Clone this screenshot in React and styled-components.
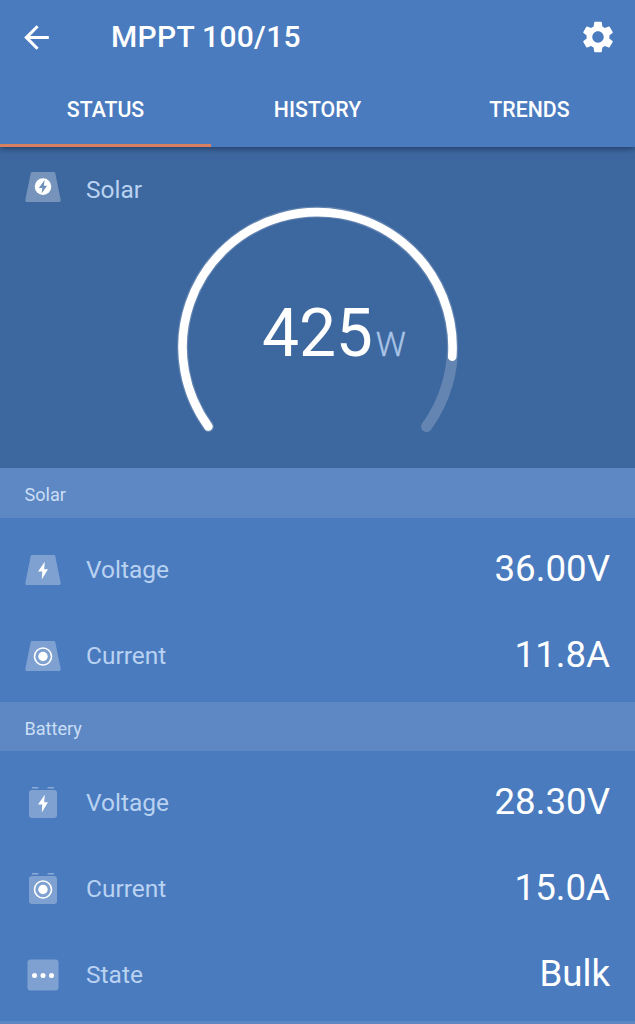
import React from "react";
import styled, { createGlobalStyle } from "styled-components";
import { MdArrowBack, MdSettings } from "react-icons/md";

const GlobalStyle = createGlobalStyle`
  * { box-sizing: border-box; }
  body { margin: 0; background: #4a7bbf; }
`;

const Screen = styled.div`
  height: 1024px;
  overflow: hidden;
  display: flex;
  flex-direction: column;
  background: #4a7bbf;
  color: #fff;
  font-family: Roboto, sans-serif;
`;

const Header = styled.header`
  flex: none;
  height: 147px;
  background: #4a7bbf;
  box-shadow: 0 1px 7px rgba(15, 30, 60, 0.7);
  position: relative;
  z-index: 1;
`;

const Toolbar = styled.div`
  height: 74px;
  padding: 0 18px;
  display: flex;
  align-items: center;
`;

const IconButton = styled.button`
  display: flex;
  padding: 0;
  border: 0;
  background: none;
  color: #fff;
`;

const Title = styled.h1`
  flex: 1;
  margin: -1px 0 0 56px;
  font-size: 30px;
  font-weight: 500;
  line-height: 36px;
  letter-spacing: 0.3px;
`;

const Tabs = styled.nav`
  height: 73px;
  display: grid;
  grid-template-columns: 211px 213px 211px;
`;

const Tab = styled.button`
  padding: 2px 0 0;
  border: 0;
  border-bottom: 3px solid ${(p) => (p.$active ? "#d5805f" : "transparent")};
  background: none;
  color: #fff;
  font: 500 21.3px/26px Roboto, sans-serif;
`;

const Hero = styled.section`
  flex: none;
  height: 321px;
  padding: 21px 24px 0;
  background: #3d689f;
`;

const HeroHeading = styled.div`
  display: flex;
  align-items: flex-start;
  height: 39px;

  > span { margin-top: 7px; }
`;

const Gauge = styled.div`
  width: 290px;
  height: 240px;
  margin: -5px 0 0 149px;
  display: grid;

  > * { grid-area: 1 / 1; }
`;

const Reading = styled.div`
  padding: 92px 0 0 89px;
  display: flex;
  align-items: baseline;
  line-height: 80px;
  font-size: 66px;
  letter-spacing: -0.2px;
`;

const Unit = styled.span`
  margin-left: 3px;
  font-size: 33.5px;
  font-weight: 300;
  color: #a9c4e6;
  -webkit-text-stroke: 0.4px #a9c4e6;
`;

const SectionBand = styled.h2`
  flex: none;
  margin: 0;
  height: ${(p) => p.$height}px;
  padding: 4px 24.5px 0;
  display: flex;
  align-items: center;
  background: #5d88c4;
  color: #cbdef5;
  font-size: 18.1px;
  line-height: 22px;
  font-weight: 400;
`;

const Rows = styled.div`
  flex: none;
  padding: 9px 25px 3px 24px;
`;

const Row = styled.div`
  height: 86px;
  display: flex;
  align-items: center;
`;

const Label = styled.span`
  flex: 1;
  margin-left: 24px;
  font-size: 24.5px;
  line-height: 30px;
  color: #b9d2f1;
`;

const Value = styled.span`
  font-size: 36.7px;
  line-height: 44px;
  margin-top: -2px;
`;

const Glyph = styled.svg`
  flex: none;
  width: 38px;
  height: 38px;
`;

const BOLT = "M20.8 10.8L14 20.5H18.2L17.8 28.6L24 18.2H20.2Z";

function DeviceIcon({ shape, symbol }) {
  const tint = "rgba(255,255,255,0.29)";
  return (
    <Glyph viewBox="0 0 38 38">
      {shape === "panel" && (
        <path d="M8.3 4H29.7Q31 4 31.3 5.3L36.7 32Q37 34 35.3 34H2.7Q1 34 1.3 32L6.7 5.3Q7 4 8.3 4Z" fill={tint} />
      )}
      {shape === "battery" && (
        <>
          <rect x="5" y="6" width="28" height="28" rx="3" fill={tint} />
          <path d="M8 3.8H14.5M23.5 3.8H30" stroke="#fff" strokeOpacity=".36" strokeWidth="1.5" />
        </>
      )}
      {shape === "box" && <rect x="3.5" y="3.5" width="31" height="31" rx="3" fill={tint} />}
      {symbol === "bolt" && <path d={BOLT} fill="#fff" />}
      {symbol === "power" && (
        <>
          <circle cx="19" cy="18.6" r="8.3" fill="#fff" />
          <path d="M20.6 12L14.8 19.9H18.3L17.7 25.2L23.1 17.7H19.9Z" fill="#6e91bb" />
        </>
      )}
      {symbol === "current" && (
        <>
          <circle cx="19" cy="19.5" r="8.5" fill="none" stroke="#fff" strokeWidth="1.6" />
          <circle cx="19" cy="19.5" r="4.7" fill="#fff" />
        </>
      )}
      {symbol === "dots" && (
        <g fill="#fff">
          <circle cx="10.5" cy="19.5" r="2.5" />
          <circle cx="19" cy="19.5" r="2.5" />
          <circle cx="27.5" cy="19.5" r="2.5" />
        </g>
      )}
    </Glyph>
  );
}

function Readings({ items, shape }) {
  return (
    <Rows>
      {items.map((item) => (
        <Row key={item.label}>
          <DeviceIcon shape={item.shape || shape} symbol={item.symbol} />
          <Label>{item.label}</Label>
          <Value>{item.value}</Value>
        </Row>
      ))}
    </Rows>
  );
}

const solar = [
  { label: "Voltage", value: "36.00V", symbol: "bolt" },
  { label: "Current", value: "11.8A", symbol: "current" },
];

const battery = [
  { label: "Voltage", value: "28.30V", symbol: "bolt" },
  { label: "Current", value: "15.0A", symbol: "current" },
  { label: "State", value: "Bulk", symbol: "dots", shape: "box" },
];

export default function App() {
  return (
    <Screen>
      <GlobalStyle />
      <Header>
        <Toolbar>
          <IconButton aria-label="Back"><MdArrowBack size={37} /></IconButton>
          <Title>MPPT 100/15</Title>
          <IconButton aria-label="Settings"><MdSettings size={38} /></IconButton>
        </Toolbar>
        <Tabs>
          <Tab $active>STATUS</Tab>
          <Tab>HISTORY</Tab>
          <Tab>TRENDS</Tab>
        </Tabs>
      </Header>
      <Hero>
        <HeroHeading>
          <DeviceIcon shape="panel" symbol="power" />
          <Label>Solar</Label>
        </HeroHeading>
        <Gauge>
          <svg width="290" height="240" viewBox="173 202 290 240" fill="none" strokeLinecap="round">
            <path d="M208.4 426.6A135 135 0 1 1 426.6 426.6" stroke="#6485b2" strokeWidth="11" />
            <path d="M208.4 426.6A135 135 0 1 1 452.2 356.7" stroke="#fff" strokeWidth="8.6" />
          </svg>
          <Reading>425<Unit>W</Unit></Reading>
        </Gauge>
      </Hero>
      <SectionBand $height={50}>Solar</SectionBand>
      <Readings items={solar} shape="panel" />
      <SectionBand $height={49}>Battery</SectionBand>
      <Readings items={battery} shape="battery" />
      <SectionBand $height={50} />
    </Screen>
  );
}
